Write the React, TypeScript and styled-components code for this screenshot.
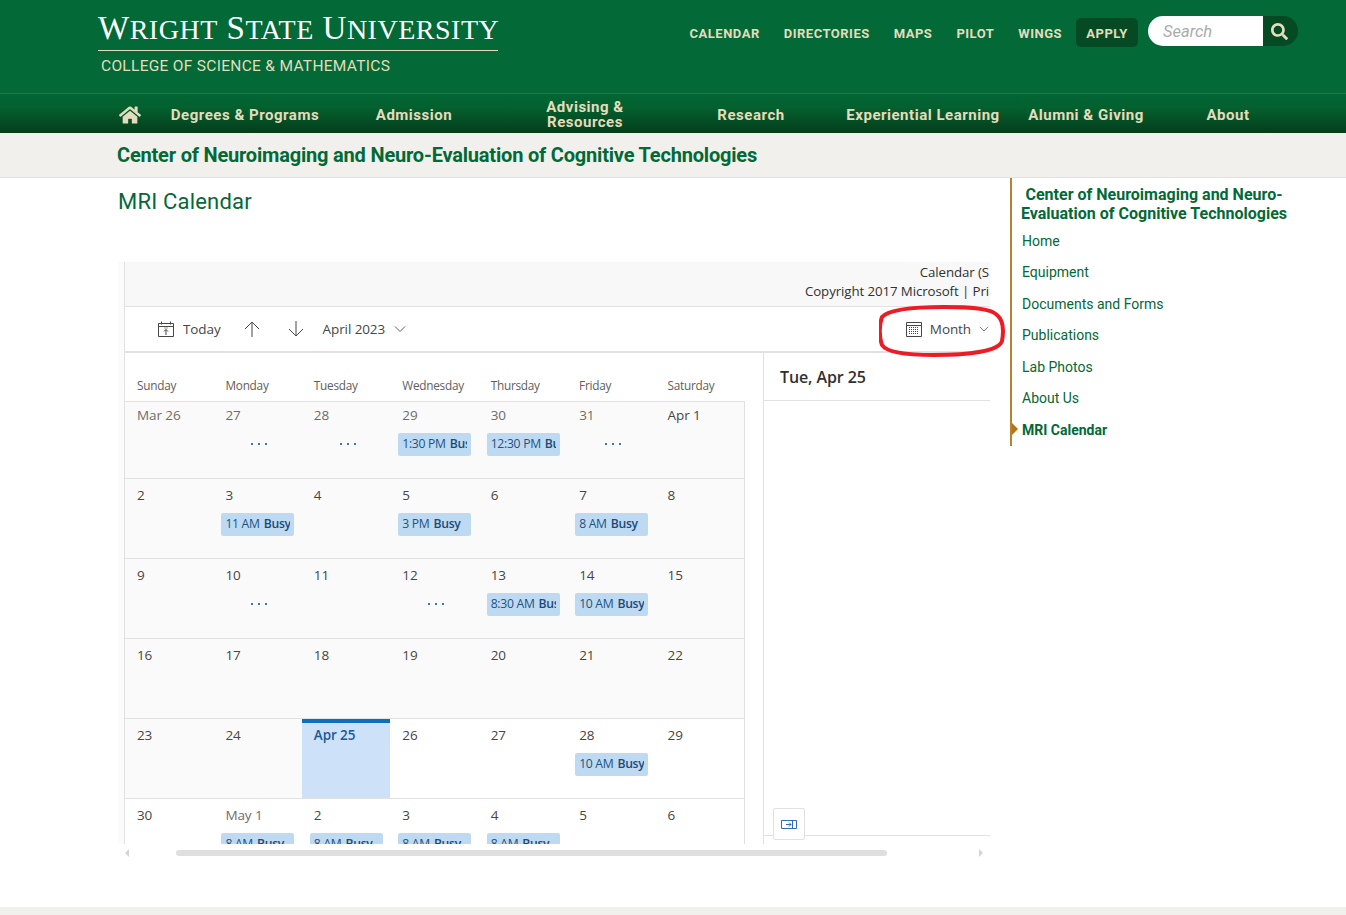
import React from "react";
import styled, { createGlobalStyle } from "styled-components";
import { FaHome, FaSearch } from "react-icons/fa";

const Global = createGlobalStyle`
  html, body { margin: 0; padding: 0; background: #fff; height: 915px; overflow: hidden; }
  * { box-sizing: border-box; }
  body { font-family: Roboto, "Liberation Sans", sans-serif; }
`;

const green = "#026937";
const cream = "#e4dcbd";
const segoe = `"Open Sans", "Noto Sans", sans-serif`;

const Header = styled.header`
  height: 93px; background: ${green}; display: flex; justify-content: space-between;
  padding: 0 48px 0 98px;
`;
const Logo = styled.div`width: 400px; padding-top: 8px;`;
const Wordmark = styled.div`
  font-family: "Liberation Serif", serif; font-size: 33px; line-height: 40px; color: #fff;
  height: 43px; border-bottom: 1px solid ${cream}; white-space: nowrap; letter-spacing: 0.52px;
`;
const Small = styled.span`font-size: 28px;`;
const College = styled.div`
  font-size: 15.5px; color: ${cream}; margin: 6px 0 0 3px; letter-spacing: 0.3px; line-height: 18px; white-space: nowrap;
`;
const Utility = styled.div`display: flex; align-items: flex-start; padding-top: 16px;`;
const UtilLink = styled.a`
  font-size: 13px; font-weight: 700; color: ${cream}; margin: 4px 24px 0 0; line-height: 28px; letter-spacing: 0.5px;
`;
const Apply = styled.a`
  font-size: 13px; font-weight: 700; color: ${cream}; background: #054a22; border-radius: 5px;
  margin: 2px 10px 0 -10px; width: 62px; height: 29px; line-height: 31px; text-align: center; letter-spacing: 0.5px;
`;
const SearchBox = styled.div`display: flex; width: 150px; height: 30px; border-radius: 15px; overflow: hidden;`;
const SearchInput = styled.input`
  width: 115px; border: 0; outline: 0; background: #fff; padding: 0 0 0 15px;
  font: italic 16.5px Roboto, sans-serif;
  &::placeholder { color: #ababab; opacity: 1; }
`;
const SearchBtn = styled.div`
  width: 35px; background: #054a22; color: ${cream}; display: flex; align-items: center; justify-content: center; padding-right: 3px;
`;

const Nav = styled.nav`
  height: 40px; border-top: 1px solid #1f7a4c;
  background: linear-gradient(#026534 0%, #04602f 35%, #053d1b 100%);
  display: grid; grid-template-columns: 40px 190px 148px 194px 138px 206px 120px 164px;
  padding-left: 110px; align-items: center;
`;
const NavItem = styled.a<{ $stack?: boolean }>`
  font-size: 15px; font-weight: 700; color: ${cream}; text-align: center; line-height: 15px; letter-spacing: 0.52px;
  display: flex; justify-content: center; align-items: center; padding-top: ${(p) => (p.$stack ? 2 : 4)}px;
`;
const Band = styled.div`
  height: 45px; background: #f1f0ec; border-bottom: 1px solid #e2e1dc; padding-left: 117px;
  font-size: 20px; font-weight: 700; color: ${green}; line-height: 44px; white-space: nowrap; letter-spacing: -0.19px;
`;

const Main = styled.main`display: flex; height: 729px;`;
const Content = styled.div`width: 1010px; padding-left: 118px;`;
const Title = styled.h1`
  margin: 0; font-size: 22px; font-weight: 400; color: ${green}; height: 84px; line-height: 48px; letter-spacing: 0.2px;
`;
const Frame = styled.div`
  position: relative; width: 872px;
`;
const Widget = styled.div`
  height: 582px; background: #fbfbfb; padding-left: 6px; font-family: ${segoe};
`;
const Inner = styled.div`
  height: 100%; border-left: 1px solid #e1e1e1; background: #fff; overflow: hidden; display: flex; flex-direction: column;
`;
const TopStrip = styled.div`
  height: 45px; background: #f8f8f8; border-bottom: 1px solid #e1e1e1; text-align: right;
  font-size: 13.3px; line-height: 19px; color: #323130; padding: 1px 1px 0 0; white-space: nowrap; letter-spacing: -0.1px;
`;
const Toolbar = styled.div`
  height: 46px; border-bottom: 2px solid #e1e1e1; display: flex; align-items: center; padding-left: 33px;
  font-size: 13.5px; color: #484644; letter-spacing: -0.1px;
`;
const ToolItem = styled.span<{ $ml?: number }>`
  display: inline-flex; align-items: center; margin-left: ${(p) => p.$ml ?? 0}px; gap: 9px;
`;
const ViewPicker = styled.span`
  margin-left: auto; display: inline-flex; align-items: center; gap: 8px; padding-right: 1px;
`;
const Body = styled.div`flex: 1; display: flex; min-height: 0;`;
const Month = styled.div`width: 620px;`;
const Heads = styled.div`
  display: grid; grid-template-columns: repeat(7, 88.43px); height: 49px; border-bottom: 1px solid #e1e1e1; background: #fff;
`;
const Head = styled.div`
  font-size: 11.8px; color: #605e5c; padding: 23px 0 0 12px; line-height: 18px; letter-spacing: -0.25px;
`;
const Weeks = styled.div`border-right: 1px solid #e1e1e1; height: 100%;`;
const Week = styled.div<{ $h: number }>`
  display: grid; grid-template-columns: repeat(7, 1fr); grid-auto-rows: 1fr; height: ${(p) => p.$h}px; border-bottom: 1px solid #e1e1e1;
`;
const Cell = styled.div<{ $past?: boolean; $today?: boolean; $first?: boolean }>`
  background: ${(p) => (p.$today ? "#cde2f9" : p.$past ? "#fafafa" : "#fff")};
  border-top: ${(p) => (p.$today ? "4px solid #106ebe" : "0")};
  padding-top: ${(p) => (p.$today ? 2 : p.$first ? 3 : 6)}px;
  overflow: hidden;
`;
const DateNum = styled.div<{ $today?: boolean; $muted?: boolean }>`
  font-size: 13.5px; line-height: 20px; padding-left: 12px; letter-spacing: -0.1px;
  color: ${(p) => (p.$today ? "#185a9d" : p.$muted ? "#6f6d6b" : "#484644")};
  font-weight: ${(p) => (p.$today ? 600 : 400)};
`;
const Chip = styled.div`
  margin: 8px 0 0 8px; width: 73px; height: 23px; border-radius: 2px; background: #bedaf3; padding: 0 4px;
`;
const ChipText = styled.div`
  color: #22527f; font-size: 12.2px; line-height: 22px; letter-spacing: -0.3px; white-space: nowrap;
  overflow: hidden; display: flex; gap: 4px;
`;
const Busy = styled.span`font-weight: 600; color: #1c4a78;`;
const More = styled.div`
  margin: 7px 0 0 0; height: 23px; padding-left: 37px; display: flex; gap: 4px; align-items: center; padding-top: 1px;
`;
const Dot = styled.i`width: 2px; height: 2px; background: #3f74bd; display: block; margin-left: 1px;`;
const Gutter = styled.div`width: 18px;`;
const Panel = styled.div`
  flex: 1; border-left: 1px solid #e1e1e1; display: flex; flex-direction: column; position: relative;
`;
const PanelHead = styled.div`
  height: 48px; border-bottom: 1px solid #e1e1e1; padding: 12px 0 0 16px; font-size: 16px; font-weight: 600;
  color: #323130; line-height: 24px; letter-spacing: -0.1px;
`;
const PanelBody = styled.div`flex: 1;`;
const PanelFoot = styled.div`height: 9px; border-top: 1px solid #e1e1e1; position: relative;`;
const Collapse = styled.button`
  position: absolute; left: 9px; top: -28px; width: 32px; height: 32px; background: #fff; border: 1px solid #e1e1e1;
  border-radius: 2px; padding: 0; display: flex; align-items: center; justify-content: center;
`;
const Scrollbar = styled.div`
  height: 14px; display: flex; align-items: center; padding: 4px 7px 0 7px;
`;
const Thumb = styled.div`width: 711px; height: 6px; border-radius: 3px; background: #dfdfdf; margin-left: 47px;`;
const Arrow = styled.i<{ $right?: boolean }>`
  display: block; width: 0; height: 0; border-top: 4px solid transparent; border-bottom: 4px solid transparent;
  ${(p) => (p.$right ? "margin-left: auto; border-left: 4px solid #cfd5d9;" : "border-right: 4px solid #cfd5d9;")}
`;
const Ring = styled.svg`position: absolute; left: 761px; top: 43px; pointer-events: none;`;

const Side = styled.aside`
  width: 270px; height: 268px; border-left: 2px solid #b5822f;
`;
const SideTitle = styled.div`
  font-size: 16px; font-weight: 700; color: ${green}; line-height: 19px; text-align: center; padding: 7px 0 0 0;
  width: 284px; white-space: nowrap; letter-spacing: 0.01px;
`;
const SideList = styled.ul`list-style: none; margin: 0; padding: 0;`;
const SideLink = styled.li<{ $active?: boolean }>`
  height: 31.4px; line-height: 18px; padding-top: ${(p) => (p.$active ? 10 : 9)}px; padding-left: 10px; font-size: 14px; color: ${green};
  font-weight: ${(p) => (p.$active ? 700 : 400)}; position: relative;
  ${(p) =>
    p.$active
      ? `&::before { content: ""; position: absolute; left: 0; top: 12px; border-left: 6px solid #b5760f; border-top: 6px solid transparent; border-bottom: 6px solid transparent; }`
      : ""}
`;
const Footer = styled.div`height: 8px; background: #f1f0ec;`;

const TodayIcon = () => (
  <svg width="16" height="16" viewBox="0 0 16 16" fill="none" stroke="#484644" strokeWidth="1">
    <path d="M.5 2.500h15v13H.5zM.5 5.500h15M3.500 .5v3M12.500 .5v3" />
    <path d="M8 14V8.500M6 10.500l2-2 2 2" stroke="#484644" />
    <path d="M6.500 7h1M8.500 7h1" />
  </svg>
);
const ArrowUp = () => (
  <svg width="16" height="16" viewBox="0 0 16 16" fill="none" stroke="#484644" strokeWidth="1">
    <path d="M8 16V1M1 8l7-7 7 7" />
  </svg>
);
const ArrowDown = () => (
  <svg width="16" height="16" viewBox="0 0 16 16" fill="none" stroke="#484644" strokeWidth="1">
    <path d="M8 0v15M1 8l7 7 7-7" />
  </svg>
);
const Chevron = ({ w = 12 }: { w?: number }) => (
  <svg width={w} height={w} viewBox="0 0 12 12" fill="none" stroke="#605e5c" strokeWidth="1">
    <path d="M1 3.500l5 5 5-5" />
  </svg>
);
const MonthIcon = () => (
  <svg width="16" height="16" viewBox="0 0 16 16" fill="none" stroke="#484644" strokeWidth="1">
    <path d="M.5 1.500h15v14H.5zM.5 4.500h15" />
    <path d="M3 6.500h10M3 8.500h10M3 10.500h10M3 12.500h10" strokeDasharray="1 1" />
  </svg>
);

type Ev = { time?: string; busy?: string; more?: boolean };
type Day = { d: string; ev?: Ev; muted?: boolean };
const C = (time: string, busy: string): Ev => ({ time, busy });
const M: Ev = { more: true };

const weeks: { h: number; days: Day[] }[] = [
  { h: 77, days: [
    { d: "Mar 26", muted: true }, { d: "27", ev: M, muted: true }, { d: "28", ev: M, muted: true },
    { d: "29", ev: C("1:30 PM", "Busy"), muted: true }, { d: "30", ev: C("12:30 PM", "Busy"), muted: true },
    { d: "31", ev: M, muted: true }, { d: "Apr 1" },
  ] },
  { h: 80, days: [
    { d: "2" }, { d: "3", ev: C("11 AM", "Busy") }, { d: "4" }, { d: "5", ev: C("3 PM", "Busy") }, { d: "6" },
    { d: "7", ev: C("8 AM", "Busy") }, { d: "8" },
  ] },
  { h: 80, days: [
    { d: "9" }, { d: "10", ev: M }, { d: "11" }, { d: "12", ev: M }, { d: "13", ev: C("8:30 AM", "Busy") },
    { d: "14", ev: C("10 AM", "Busy") }, { d: "15" },
  ] },
  { h: 80, days: [
    { d: "16" }, { d: "17" }, { d: "18" }, { d: "19" }, { d: "20" }, { d: "21" }, { d: "22" },
  ] },
  { h: 80, days: [
    { d: "23" }, { d: "24" }, { d: "Apr 25" }, { d: "26" }, { d: "27" }, { d: "28", ev: C("10 AM", "Busy") }, { d: "29" },
  ] },
  { h: 80, days: [
    { d: "30" }, { d: "May 1", muted: true, ev: C("8 AM", "Busy") }, { d: "2", ev: C("8 AM", "Busy") }, { d: "3", ev: C("8 AM", "Busy") },
    { d: "4", ev: C("8 AM", "Busy") }, { d: "5" }, { d: "6" },
  ] },
];
const pastUntil = 4;

export default function App() {
  return (
    <>
      <Global />
      <Header>
        <Logo>
          <Wordmark>
            W<Small>RIGHT</Small> S<Small>TATE</Small> U<Small>NIVERSITY</Small>
          </Wordmark>
          <College>COLLEGE OF SCIENCE &amp; MATHEMATICS</College>
        </Logo>
        <Utility>
          {["CALENDAR", "DIRECTORIES", "MAPS", "PILOT", "WINGS"].map((t) => (
            <UtilLink key={t}>{t}</UtilLink>
          ))}
          <Apply>APPLY</Apply>
          <SearchBox>
            <SearchInput placeholder="Search" />
            <SearchBtn><FaSearch size={17} /></SearchBtn>
          </SearchBox>
        </Utility>
      </Header>
      <Nav>
        <NavItem $stack><FaHome size={22} /></NavItem>
        <NavItem>Degrees &amp; Programs</NavItem>
        <NavItem>Admission</NavItem>
        <NavItem $stack>Advising &amp;<br />Resources</NavItem>
        <NavItem>Research</NavItem>
        <NavItem>Experiential Learning</NavItem>
        <NavItem>Alumni &amp; Giving</NavItem>
        <NavItem>About</NavItem>
      </Nav>
      <Band>Center of Neuroimaging and Neuro-Evaluation of Cognitive Technologies</Band>
      <Main>
        <Content>
          <Title>MRI Calendar</Title>
          <Frame>
            <Widget>
              <Inner>
                <TopStrip>Calendar (S<br />Copyright 2017 Microsoft | Pri</TopStrip>
                <Toolbar>
                  <ToolItem><TodayIcon />Today</ToolItem>
                  <ToolItem $ml={23}><ArrowUp /></ToolItem>
                  <ToolItem $ml={28}><ArrowDown /></ToolItem>
                  <ToolItem $ml={19}>April 2023 <Chevron /></ToolItem>
                  <ViewPicker><MonthIcon />Month <Chevron w={10} /></ViewPicker>
                </Toolbar>
                <Body>
                  <Month>
                    <Heads>
                      {["Sunday", "Monday", "Tuesday", "Wednesday", "Thursday", "Friday", "Saturday"].map((h) => (
                        <Head key={h}>{h}</Head>
                      ))}
                    </Heads>
                    <Weeks>
                      {weeks.map((w, i) => (
                        <Week key={i} $h={w.h}>
                          {w.days.map((day, j) => {
                            const today = i === 4 && j === 2;
                            const past = i < pastUntil || (i === pastUntil && j < 2);
                            return (
                              <Cell key={j} $past={past} $today={today} $first={i === 0}>
                                <DateNum $today={today} $muted={day.muted}>{day.d}</DateNum>
                                {day.ev?.more && (
                                  <More><Dot /><Dot /><Dot /></More>
                                )}
                                {day.ev?.time && (
                                  <Chip><ChipText><span>{day.ev.time}</span><Busy>{day.ev.busy}</Busy></ChipText></Chip>
                                )}
                              </Cell>
                            );
                          })}
                        </Week>
                      ))}
                    </Weeks>
                  </Month>
                  <Gutter />
                  <Panel>
                    <PanelHead>Tue, Apr 25</PanelHead>
                    <PanelBody />
                    <PanelFoot>
                      <Collapse aria-label="Collapse">
                        <svg width="16" height="9" viewBox="0 0 16 9" fill="none" strokeWidth="1">
                          <path d="M.5.500h15v8H.5zM11.500.500v8" stroke="#2f6db5" />
                          <path d="M5 4.500h5M8 2.500l2 2-2 2" stroke="#2f6db5" />
                        </svg>
                      </Collapse>
                    </PanelFoot>
                  </Panel>
                </Body>
              </Inner>
            </Widget>
            <Scrollbar>
              <Arrow />
              <Thumb />
              <Arrow $right />
            </Scrollbar>
            <Ring width="126" height="52" viewBox="0 0 126 52" fill="none">
              <path
                d="M3 12C10 4 40 2 65 2C90 2 112 3 118 10C124 15 125 25 123 36C120 46 90 50 55 50C30 50 8 48 3 40C0 32 0 20 3 12Z"
                stroke="#ed1c24"
                strokeWidth="4"
              />
            </Ring>
          </Frame>
        </Content>
        <Side>
          <SideTitle>Center of Neuroimaging and Neuro-<br />Evaluation of Cognitive Technologies</SideTitle>
          <SideList>
            <SideLink>Home</SideLink>
            <SideLink>Equipment</SideLink>
            <SideLink>Documents and Forms</SideLink>
            <SideLink>Publications</SideLink>
            <SideLink>Lab Photos</SideLink>
            <SideLink>About Us</SideLink>
            <SideLink $active>MRI Calendar</SideLink>
          </SideList>
        </Side>
      </Main>
      <Footer />
    </>
  );
}
